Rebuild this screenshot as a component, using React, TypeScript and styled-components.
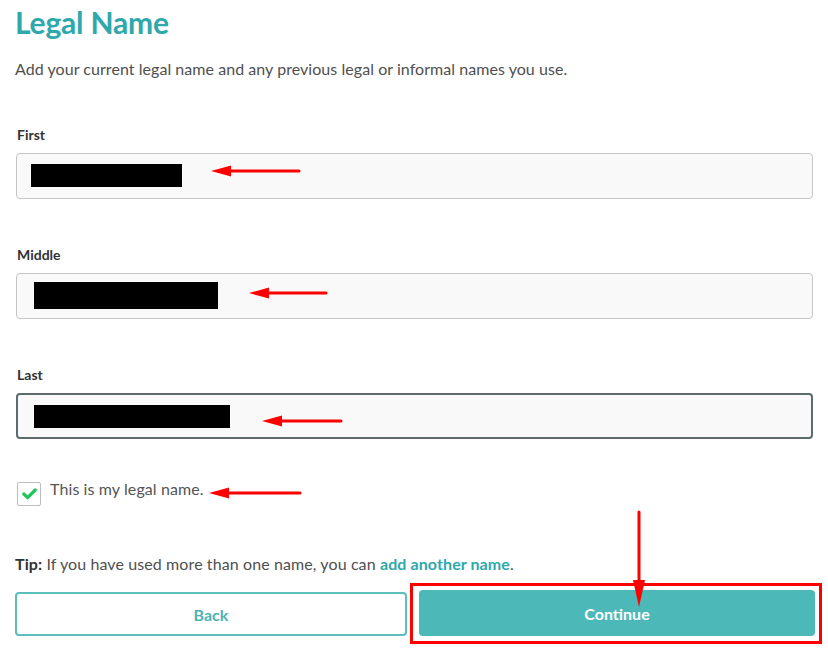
import React from "react";
import styled, { createGlobalStyle } from "styled-components";

const GlobalStyle = createGlobalStyle`
  html, body { margin: 0; padding: 0; background: #ffffff; }
  body { font-family: Lato, "Noto Sans", "Liberation Sans", sans-serif; color: #4a4a4a; }
  * { box-sizing: border-box; }
`;

const Page = styled.div`
  position: relative;
  width: 828px;
  height: 653px;
  padding: 0 0 0 15px;
  overflow: hidden;
`;

const Title = styled.h1`
  margin: 0;
  font-size: 30px;
  line-height: 44px;
  font-weight: 700;
  color: #2fa8ab;
  letter-spacing: -0.2px;
`;

const Description = styled.p`
  margin: 14px 0 0;
  font-size: 16px;
  line-height: 22px;
  color: #4f4f4f;
  letter-spacing: 0.05px;
`;

const FieldGroup = styled.div<{ $top: number }>`
  margin-top: ${(p) => p.$top}px;
  display: flex;
  flex-direction: column;
  gap: 8px;
`;

const Label = styled.label`
  padding-left: 2px;
  font-size: 14px;
  line-height: 20px;
  font-weight: 700;
  color: #333;
`;

const InputBox = styled.div<{ $focused?: boolean }>`
  width: 797px;
  height: 46px;
  margin-left: 1px;
  display: flex;
  align-items: center;
  padding-left: ${(p) => (p.$focused ? 16 : 17)}px;
  background: #f9f9f9;
  border: ${(p) => (p.$focused ? "2px solid #5d6b70" : "1px solid #c6c6c6")};
  border-radius: 4px;
`;

const Redaction = styled.div<{ $w: number; $h: number; $dx: number; $dy: number }>`
  width: ${(p) => p.$w}px;
  height: ${(p) => p.$h}px;
  margin-left: ${(p) => p.$dx}px;
  margin-top: ${(p) => p.$dy}px;
  background: #000;
`;

const CheckRow = styled.div`
  margin-top: 43px;
  display: flex;
  align-items: flex-start;
  gap: 9px;
  padding-left: 2px;
`;

const CheckBox = styled.div`
  flex-shrink: 0;
  width: 24px;
  height: 24px;
  border: 1px solid #bdbdbd;
  border-radius: 2px;
  background: #fff;
  display: flex;
  align-items: center;
  justify-content: center;
`;

const CheckText = styled.span`
  font-size: 16px;
  line-height: 13px;
  color: #555;
  letter-spacing: 0.1px;
`;

const Tip = styled.p`
  margin: 47px 0 0;
  font-size: 16px;
  line-height: 22px;
  color: #4f4f4f;
  letter-spacing: 0.1px;
`;

const Strong = styled.strong`
  color: #333;
  font-weight: 700;
`;

const TipLink = styled.a`
  color: #2fa8ab;
  font-weight: 700;
  text-decoration: none;
`;

const Actions = styled.div`
  margin-top: 8px;
  display: flex;
  align-items: center;
  gap: 3px;
`;

const BackButton = styled.button`
  flex-shrink: 0;
  width: 392px;
  height: 44px;
  margin-top: 1px;
  background: #fff;
  border: 2px solid #5cbdbd;
  border-radius: 4px;
  color: #4cb3b3;
  font-family: inherit;
  font-size: 16px;
  font-weight: 700;
`;

const Highlight = styled.div`
  flex-shrink: 0;
  border: 3px solid #ff0000;
  padding: 4px 4px 5px 6px;
`;

const ContinueButton = styled.button`
  width: 396px;
  height: 46px;
  background: #4db8b8;
  border: none;
  border-radius: 4px;
  color: #fff;
  font-family: inherit;
  font-size: 16px;
  font-weight: 700;
  display: block;
`;

const Overlay = styled.svg`
  position: absolute;
  left: 0;
  top: 0;
  pointer-events: none;
`;

const hArrows = [
  { tip: 211, tail: 299, y: 171 },
  { tip: 249, tail: 326, y: 293 },
  { tip: 262, tail: 341, y: 421 },
  { tip: 209, tail: 300, y: 493 },
];

export default function App() {
  return (
    <>
      <GlobalStyle />
      <Page>
        <Title>Legal Name</Title>
        <Description>
          Add your current legal name and any previous legal or informal names you use.
        </Description>

        <FieldGroup $top={45}>
          <Label>First</Label>
          <InputBox>
            <Redaction $w={151} $h={23} $dx={-3} $dy={-1} />
          </InputBox>
        </FieldGroup>

        <FieldGroup $top={46}>
          <Label>Middle</Label>
          <InputBox>
            <Redaction $w={184} $h={27} $dx={0} $dy={-2} />
          </InputBox>
        </FieldGroup>

        <FieldGroup $top={46}>
          <Label>Last</Label>
          <InputBox $focused>
            <Redaction $w={196} $h={23} $dx={0} $dy={1} />
          </InputBox>
        </FieldGroup>

        <CheckRow>
          <CheckBox>
            <svg width="15" height="12" viewBox="0 0 15 12">
              <path
                d="M1.8 6 L5.6 9.6 L13.2 2"
                fill="none"
                stroke="#1fc759"
                strokeWidth="3.2"
                strokeLinecap="round"
                strokeLinejoin="round"
              />
            </svg>
          </CheckBox>
          <CheckText>This is my legal name.</CheckText>
        </CheckRow>

        <Tip>
          <Strong>Tip:</Strong> If you have used more than one name, you can{" "}
          <TipLink href="#">add another name</TipLink>.
        </Tip>

        <Actions>
          <BackButton>Back</BackButton>
          <Highlight>
            <ContinueButton>Continue</ContinueButton>
          </Highlight>
        </Actions>

        <Overlay width="828" height="653" viewBox="0 0 828 653">
          {hArrows.map((a, i) => (
            <g key={i}>
              <line
                x1={a.tip + 16}
                y1={a.y}
                x2={a.tail}
                y2={a.y}
                stroke="#ff0000"
                strokeWidth="3"
                strokeLinecap="round"
              />
              <polygon
                points={`${a.tip},${a.y} ${a.tip + 20},${a.y - 5.5} ${a.tip + 20},${a.y + 5.5}`}
                fill="#ff0000"
              />
            </g>
          ))}
          <line x1="639" y1="512" x2="639" y2="585" stroke="#ff0000" strokeWidth="3" strokeLinecap="round" />
          <polygon points="639,607 633,580 645,580" fill="#ff0000" />
        </Overlay>
      </Page>
    </>
  );
}
